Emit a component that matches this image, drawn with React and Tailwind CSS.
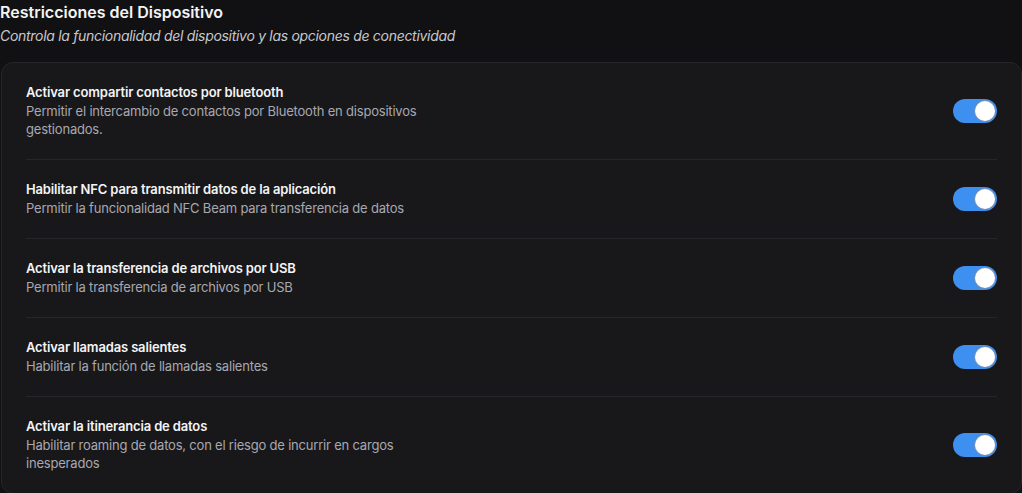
import { useState } from 'react'

const SETTINGS = [
  {
    id: 'bt',
    title: 'Activar compartir contactos por bluetooth',
    desc: 'Permitir el intercambio de contactos por Bluetooth en dispositivos gestionados.',
  },
  {
    id: 'nfc',
    title: 'Habilitar NFC para transmitir datos de la aplicación',
    desc: 'Permitir la funcionalidad NFC Beam para transferencia de datos',
  },
  {
    id: 'usb',
    title: 'Activar la transferencia de archivos por USB',
    desc: 'Permitir la transferencia de archivos por USB',
  },
  {
    id: 'calls',
    title: 'Activar llamadas salientes',
    desc: 'Habilitar la función de llamadas salientes',
  },
  {
    id: 'roaming',
    title: 'Activar la itinerancia de datos',
    desc: 'Habilitar roaming de datos, con el riesgo de incurrir en cargos inesperados',
  },
]

function Toggle({ on, onChange }) {
  return (
    <button
      onClick={onChange}
      className={`relative flex items-center w-[44px] h-[24px] rounded-full shrink-0 px-[2px] ${on ? 'bg-[#3d8ff0] justify-end' : 'bg-[#3f3f46] justify-start'}`}
    >
      <span className="block w-[20px] h-[20px] rounded-full bg-white ring-1 ring-[#6b8fc4]" />
    </button>
  )
}

export default function App() {
  const [state, setState] = useState({ bt: true, nfc: true, usb: true, calls: true, roaming: true })

  return (
    <div className="min-h-screen bg-[#111113] text-white font-['Inter',sans-serif] overflow-hidden">
      <h2 className="text-base leading-6 font-semibold text-[#f4f4f5]">Restricciones del Dispositivo</h2>
      <p className="text-sm leading-6 italic tracking-[-0.3px] text-[#c8c8cc]">
        Controla la funcionalidad del dispositivo y las opciones de conectividad
      </p>
      <div className="mt-[14px] ml-[1px] mr-0 rounded-xl border border-[#26262a] bg-[#18181b] px-6">
        {SETTINGS.map((s, i) => (
          <div
            key={s.id}
            className={`flex items-center justify-between pt-5 pb-[21px] ${i < SETTINGS.length - 1 ? 'border-b border-[#26262a]' : ''}`}
          >
            <div className="max-w-[420px]">
              <p className="text-[13px] leading-[18px] font-semibold tracking-[-0.15px] text-[#f4f4f5]">{s.title}</p>
              <p className="mt-[1px] text-[13px] leading-[18px] tracking-[-0.2px] text-[#a8a8b0]">{s.desc}</p>
            </div>
            <Toggle on={state[s.id]} onChange={() => setState((p) => ({ ...p, [s.id]: !p[s.id] }))} />
          </div>
        ))}
      </div>
    </div>
  )
}
